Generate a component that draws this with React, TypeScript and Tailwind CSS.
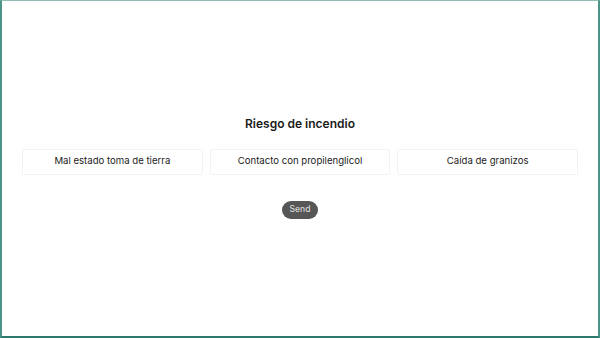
export default function App() {
  const options = ["Mal estado toma de tierra", "Contacto con propilenglicol", "Caída de granizos"];

  return (
    <div
      className="w-[600px] h-[338px] bg-white border-x-2 border-t border-b-2 border-x-[#4a9488] border-t-[#8dbdb5] border-b-[#2b7a6b] flex flex-col items-center justify-center px-[20px]"
      style={{ fontFamily: "Inter, 'Liberation Sans', sans-serif" }}
    >
      <h2 className="text-[12px] font-semibold text-[#1a1a1a] leading-[16px] -mt-[3px]">Riesgo de incendio</h2>
      <div className="mt-[17px] grid grid-cols-3 gap-[7px] w-full">
        {options.map((o) => (
          <button
            key={o}
            className="h-[26px] border border-[#f2f2f2] rounded-[2px] bg-white text-[9.6px] text-[#222] flex items-center justify-center"
          >
            {o}
          </button>
        ))}
      </div>
      <button className="mt-[26px] h-[18px] w-[36px] rounded-full bg-[#565656] text-[#d8d8d8] text-[8.5px] font-medium flex items-center justify-center">
        Send
      </button>
    </div>
  );
}
